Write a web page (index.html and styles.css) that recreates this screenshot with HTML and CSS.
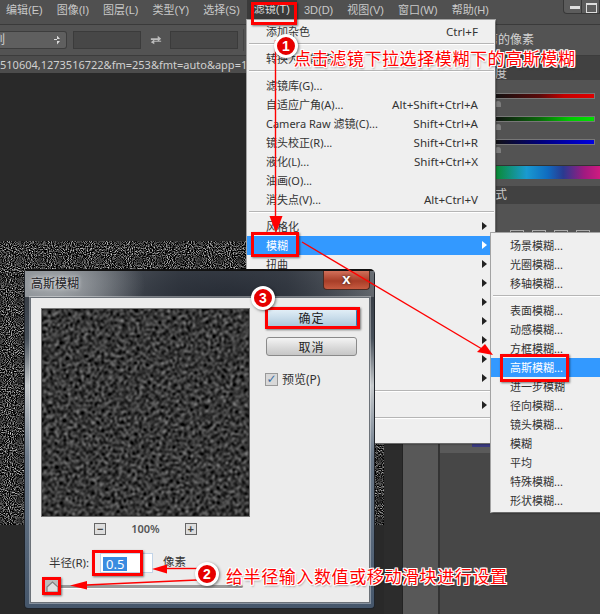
FILE: index.html
```
<!DOCTYPE html>
<html lang="zh">
<head>
<meta charset="utf-8">
<title>高斯模糊</title>
<link rel="stylesheet" href="styles.css">
</head>
<body>
<div class="screen">
  <svg class="defs" width="0" height="0" aria-hidden="true">
    <filter id="grain" x="0" y="0" width="100%" height="100%" color-interpolation-filters="sRGB">
      <feTurbulence type="fractalNoise" baseFrequency="0.95" numOctaves="1" seed="4"/>
      <feColorMatrix type="matrix" values="1 0 0 0 0 1 0 0 0 0 1 0 0 0 0 0 0 0 0 1"/>
      <feComponentTransfer>
        <feFuncR type="linear" slope="2.2" intercept="-0.9"/>
        <feFuncG type="linear" slope="2.2" intercept="-0.9"/>
        <feFuncB type="linear" slope="2.2" intercept="-0.9"/>
      </feComponentTransfer>
    </filter>
    <filter id="soft" x="0" y="0" width="100%" height="100%" color-interpolation-filters="sRGB">
      <feTurbulence type="fractalNoise" baseFrequency="0.45" numOctaves="2" seed="9"/>
      <feColorMatrix type="matrix" values="1 0 0 0 0 1 0 0 0 0 1 0 0 0 0 0 0 0 0 1"/>
      <feGaussianBlur stdDeviation="0.8"/>
      <feComponentTransfer>
        <feFuncR type="linear" slope="2.2" intercept="-0.88"/>
        <feFuncG type="linear" slope="2.2" intercept="-0.88"/>
        <feFuncB type="linear" slope="2.2" intercept="-0.88"/>
      </feComponentTransfer>
    </filter>
  </svg>

  <header class="menubar">
    <span>编辑(E)</span><span>图像(I)</span><span>图层(L)</span><span>类型(Y)</span><span>选择(S)</span>
    <span class="menu-open">滤镜(T)</span><span>3D(D)</span><span>视图(V)</span><span>窗口(W)</span><span>帮助(H)</span>
    <div class="winctl"><i class="minbtn"></i><i class="maxbtn"></i></div>
  </header>

  <div class="optionsbar">
    <div class="select"><span class="cut">列</span><span class="updown"></span></div>
    <div class="field"></div>
    <svg class="swap" viewBox="0 0 14 12"><path d="M1 4h8V1l4 3.500L9 8V6H1zM13 8H5v3L1 8.500 5 5v2h8z" fill="#bbb"/></svg>
    <div class="field"></div>
    <div class="rule"></div>
    <span class="optlabel">剪的像素</span>
  </div>

  <main class="workspace">
    <section class="canvas">
      <div class="tab">510604,1273516722&amp;fm=253&amp;fmt=auto&amp;app=1</div>
      <div class="pasteboard"></div>
      <svg class="noise"><rect width="100%" height="100%" filter="url(#grain)"/></svg>
      <div class="pasteboard-low"></div>
    </section>
    <div class="band"></div>
    <div class="midcol"></div>
    <aside class="dock">
      <div class="dock-tabs"><span>度</span></div>
      <div class="sliders">
        <div class="ramp ramp-r"></div><i class="tick"></i>
        <div class="ramp ramp-g"></div><i class="tick"></i>
        <div class="ramp ramp-b"></div><i class="tick"></i>
      </div>
      <div class="spectrum"></div>
      <div class="dock-tabs second"><span>式</span></div>
      <div class="dock-icons"><i></i><i></i><i></i><i></i></div>
      <div class="dock-fill"><div class="dock-strip"><i></i></div></div>
    </aside>
  </main>

  <nav class="menu filter-menu">
    <div class="row"><span>添加杂色</span><span class="keys">Ctrl+F</span></div>
    <div class="sep"></div>
    <div class="row"><span>转换为智能滤镜</span></div>
    <div class="sep"></div>
    <div class="row"><span>滤镜库(G)...</span></div>
    <div class="row"><span>自适应广角(A)...</span><span class="keys">Alt+Shift+Ctrl+A</span></div>
    <div class="row"><span>Camera Raw 滤镜(C)...</span><span class="keys">Shift+Ctrl+A</span></div>
    <div class="row"><span>镜头校正(R)...</span><span class="keys">Shift+Ctrl+R</span></div>
    <div class="row"><span>液化(L)...</span><span class="keys">Shift+Ctrl+X</span></div>
    <div class="row"><span>油画(O)...</span></div>
    <div class="row"><span>消失点(V)...</span><span class="keys">Alt+Ctrl+V</span></div>
    <div class="sep"></div>
    <div class="row more"><span>风格化</span></div>
    <div class="row more active"><span>模糊</span></div>
    <div class="row more"><span>扭曲</span></div>
    <div class="row more"></div>
    <div class="row more"></div>
    <div class="row more"></div>
    <div class="row more"></div>
    <div class="row more"></div>
    <div class="row more"></div>
    <div class="sep"></div>
    <div class="row more"></div>
    <div class="sep"></div>
    <div class="row"></div>
  </nav>

  <nav class="menu blur-menu">
    <div class="row"><span>场景模糊...</span></div>
    <div class="row"><span>光圈模糊...</span></div>
    <div class="row"><span>移轴模糊...</span></div>
    <div class="sep"></div>
    <div class="row"><span>表面模糊...</span></div>
    <div class="row"><span>动感模糊...</span></div>
    <div class="row"><span>方框模糊...</span></div>
    <div class="row active"><span>高斯模糊...</span></div>
    <div class="row"><span>进一步模糊</span></div>
    <div class="row"><span>径向模糊...</span></div>
    <div class="row"><span>镜头模糊...</span></div>
    <div class="row"><span>模糊</span></div>
    <div class="row"><span>平均</span></div>
    <div class="row"><span>特殊模糊...</span></div>
    <div class="row"><span>形状模糊...</span></div>
  </nav>

  <section class="dialog">
    <div class="titlebar">
      <span class="title">高斯模糊</span>
      <span class="close">x</span>
    </div>
    <div class="dialog-body">
      <div class="left">
        <svg class="preview"><rect width="100%" height="100%" filter="url(#soft)"/></svg>
        <div class="zoomrow">
          <span class="zbtn">−</span><span class="zval">100%</span><span class="zbtn">+</span>
        </div>
        <div class="radius">
          <span class="rlabel">半径(R):</span>
          <div class="rinput"><span class="selected">0.5</span></div>
          <span class="runit">像素</span>
        </div>
        <div class="track">
          <svg class="thumb" viewBox="0 0 15 15"><path d="M2 13V8L7.500 3 13 8v5z" fill="#e0e0e0" stroke="#808080" stroke-width="1.200"/></svg>
          <div class="rail"></div>
        </div>
      </div>
      <div class="right">
        <button class="btn primary">确定</button>
        <button class="btn">取消</button>
        <label class="check"><span class="box">✓</span><span>预览(P)</span></label>
      </div>
    </div>
  </section>

  <svg class="arrows" viewBox="0 0 600 614">
    <g class="lines">
      <line x1="275.500" y1="40" x2="275.500" y2="218"/>
      <line x1="302" y1="242" x2="482" y2="349"/>
      <line x1="198" y1="568.500" x2="166" y2="568.500"/>
      <line x1="197" y1="580" x2="86" y2="585"/>
    </g>
    <g class="heads">
      <path d="M269.500 216h13L276 233z"/>
      <path d="M493 355l-16-3 8-8z"/>
      <path d="M152 569l15-4.500v9z"/>
      <path d="M70 585.500l17-4.500v8.500z"/>
    </g>
  </svg>

  <div class="mark mark-menu"></div>
  <div class="mark mark-blur"></div>
  <div class="mark mark-gauss"></div>
  <div class="mark mark-ok"></div>
  <div class="mark mark-input"></div>
  <div class="mark mark-thumb"></div>

  <span class="badge badge-1">1</span>
  <span class="badge badge-2">2</span>
  <span class="badge badge-3">3</span>

  <p class="note note-1">点击滤镜下拉选择模糊下的高斯模糊</p>
  <p class="note note-2">给半径输入数值或移动滑块进行设置</p>
</div>
</body>
</html>
```
FILE: styles.css
```
* { box-sizing: border-box; }
html, body { margin: 0; padding: 0; background: #333; }
body { font: 12px/1 "Liberation Sans", "Noto Sans CJK SC", sans-serif; }
p { margin: 0; }
.defs { position: absolute; }

.screen {
  position: relative; width: 600px; height: 614px; overflow: hidden;
  display: flex; flex-direction: column; background: #535353;
}

/* application chrome */
.menubar {
  height: 25px; flex: none; display: flex; align-items: center; gap: 14px;
  padding: 0 0 3px 6px; background: #505050; color: #c9c9c9; border-bottom: 1px solid #3a3a3a;
  white-space: nowrap; position: relative; font-size: 11px;
}
.menu-open { color: #ddd; background: #3a3a3a; margin: -3px -7px 0; padding: 8px 7px 7px; }
.winctl { position: absolute; top: 0; right: 0; width: 37px; height: 14px; display: flex; background: #5c5c5c; border: 1px solid #383838; border-top: 0; border-radius: 0 0 0 4px; }
.winctl i { flex: 1; position: relative; }
.minbtn { border-right: 1px solid #383838; }
.minbtn::after { content: ""; position: absolute; left: 6px; top: 6px; width: 10px; height: 3px; background: #ddd; }
.maxbtn::after { content: ""; position: absolute; left: 4px; top: 3px; width: 9px; height: 7px; border: 1px solid #ddd; border-top-width: 2px; }

.optionsbar {
  height: 31px; flex: none; display: flex; align-items: center; gap: 6px;
  background: #535353; border-bottom: 1px solid #3c3c3c; position: relative;
}
.select {
  width: 67px; height: 18px; display: flex; align-items: center; justify-content: space-between;
  padding: 0 6px 0 0; background: #5f5f5f; border: 1px solid #3d3d3d; border-left: 0; border-radius: 0 3px 3px 0; color: #ccc; overflow: hidden;
}
.cut { margin-left: -7px; }
.updown { width: 6px; height: 9px; background: linear-gradient(#ddd 0 40%, transparent 40% 60%, #ddd 60%); clip-path: polygon(50% 0, 100% 40%, 0 40%, 0 60%, 100% 60%, 50% 100%); }
.field { width: 68px; height: 18px; background: #474747; border: 1px solid #3b3b3b; }
.swap { width: 12px; height: 12px; margin: 0 2px 0 3px; }
.rule { width: 1px; height: 22px; background: #444; margin-left: -1px; }
.optlabel { position: absolute; left: 486px; top: 9px; color: #d2d2d2; font-size: 12px; }

.workspace { flex: 1; min-height: 0; display: flex; }
.canvas { width: 384px; flex: none; display: flex; flex-direction: column; background: #282828; }
.tab { height: 17px; flex: none; background: #4c4c4c; color: #d0d0d0; padding-top: 2px; font-family: "Noto Sans", sans-serif; font-size: 11px; line-height: 14px; white-space: nowrap; overflow: hidden; }
.pasteboard { height: 168px; flex: none; background: #292929; }
.noise { display: block; width: 100%; height: 284px; flex: none; background: #111; }
.pasteboard-low { flex: 1; background: #292929; }
.band { width: 19px; flex: none; background: #2c2c2c; border-right: 1px solid #232323; }
.midcol { width: 37px; flex: none; background: #585858; border-right: 2px solid #333; }
.dock { flex: 1; min-width: 0; display: flex; flex-direction: column; background: #535353; }
.dock-tabs { height: 24px; flex: none; background: #414141; color: #c8c8c8; padding: 12px 0 0 55px; font-size: 12px; }
.dock-tabs span { display: inline-block; }
.sliders { padding: 13px 5px 0 55px; display: flex; flex-direction: column; height: 85px; flex: none; }
.ramp { height: 6px; flex: none; border: 1px solid #777; border-left: 0; }
.ramp-r { background: linear-gradient(90deg, #111, #5a0a0a 45%, #c40000 70%, #e00000); }
.ramp-g { background: linear-gradient(90deg, #111, #0a6a0a 45%, #00c800 75%, #00e000); }
.ramp-b { background: linear-gradient(90deg, #111, #00007a 45%, #0000e0); }
.tick { display: block; width: 5px; height: 17px; flex: none; position: relative; }
.tick::after { content: ""; position: absolute; left: 0; top: 2px; width: 6px; height: 6px; background: #7d7d7d; border-radius: 50% 50% 0 0; }
.spectrum { height: 14px; flex: none; margin: 0 0 7px 55px; border-top: 1px solid #333; background:
  linear-gradient(90deg, #0a8a30 0, #1a9ad0 30%, #106cc0 50%, #2a3a90 65%, #a01a80 85%, #d01a80 100%); }
.dock-tabs.second { height: 18px; padding-top: 3px; }
.dock-icons { height: 34px; flex: none; display: flex; align-items: flex-end; gap: 8px; padding: 0 8px 0 70px; }
.dock-icons i { width: 14px; height: 8px; border: 1px solid #aaa; border-bottom: 0; }
.dock-fill { flex: 1; background: #474747; padding-top: 205px; }
.dock-strip { width: 50px; height: 10px; background: #5a5a5a; position: relative; }
.dock-strip i { position: absolute; right: 0; top: 0; width: 18px; height: 4px; background: #3b3b80; }

/* menus */
.menu {
  position: absolute; background: #efefef; color: #333; display: flex; flex-direction: column;
  box-shadow: 1px 1px 2px rgba(0,0,0,.55), 0 0 0 1px #aaa;
  font-family: "Noto Sans", "Noto Sans CJK SC", sans-serif; font-size: 11px;
}
.row { height: 19px; flex: none; display: flex; align-items: center; justify-content: space-between; position: relative; white-space: nowrap; line-height: 19px; }
.keys { font-size: 11.6px; }
.row.active { background: #3399ff; color: #fff; }
.more::after { content: ""; position: absolute; right: 8px; top: 5px; border-left: 5px solid #222; border-top: 4px solid transparent; border-bottom: 4px solid transparent; }
.more.active::after { border-left-color: #fff; }
.sep { height: 8px; flex: none; padding-top: 2px; }
.sep::before { content: ""; display: block; height: 2px; background: linear-gradient(#b5b5b5 50%, #fff 50%); }
.filter-menu { left: 247px; top: 20px; width: 248px; height: 423px; padding-top: 2px; }
.filter-menu .row { padding: 0 17px 0 19px; }
.filter-menu .sep { margin: 0 1px 0 2px; }
.blur-menu { left: 491px; top: 233px; width: 109px; height: 279px; padding-top: 2.5px; z-index: 2; }
.blur-menu .row { padding-left: 19px; }
.blur-menu .sep { margin: 0 0 0 2px; }

/* dialog */
.dialog {
  position: absolute; left: 24px; top: 269px; width: 351px; height: 340px; z-index: 3;
  display: flex; flex-direction: column; padding: 0 4px 5px 5px;
  border: 1px solid #20242a; border-top: 2px solid #111; border-radius: 5px 5px 4px 4px;
  background: linear-gradient(#9aa0a6 0, #3a4048 8%, #47505a 20%, #c7cbce 34%, #6c7a8a 55%, #45566b 100%);
}
.titlebar {
  height: 26px; flex: none; margin: 0 -4px 0 -5px; padding: 0 0 0 6px; display: flex; align-items: flex-start; justify-content: space-between;
  background: radial-gradient(ellipse 90px 50px at 30px 14px, #a4a8ac 0, rgba(150,155,160,0) 100%), radial-gradient(ellipse 170px 60px at 200px 30px, #252a33 0, rgba(50,55,65,0) 100%), linear-gradient(90deg, #747a80, #3f454e 45%, #434952 75%, #6b7076);
}
.title { margin-top: 6px; color: #1c2024; text-shadow: 0 0 4px #fff; font-size: 12px; line-height: 14px; }
.close {
  width: 47px; height: 19px; margin-right: 4px; border: 1px solid #4b2a22; border-top: 0; border-radius: 0 0 4px 4px;
  background: linear-gradient(#d2705a, #a83e28 55%, #c65a40); color: #fff; text-align: center;
  font: bold 15px/15px "Liberation Sans", sans-serif; text-shadow: 0 0 3px #222;
}
.dialog-body {
  flex: 1; display: flex; gap: 16px; padding: 10px 0 0 10px; background: #ececec;
  border: 1px solid #6b7178; box-shadow: 0 0 0 1px rgba(255,255,255,.35);
}
.left { width: 209px; flex: none; display: flex; flex-direction: column; }
.preview { display: block; width: 209px; height: 209px; flex: none; background: #161616; border: 1px solid #777; }
.zoomrow { display: flex; justify-content: center; align-items: center; gap: 25px; margin-top: 6px; height: 12px; color: #444; }
.zbtn { width: 12px; height: 12px; border: 1px solid #666; background: #ddd; font: bold 11px/10px "Liberation Sans", sans-serif; text-align: center; }
.zval { font: 11px/12px "Noto Sans", sans-serif; color: #555; font-weight: 600; }
.radius { display: flex; align-items: center; height: 20px; margin: 18px 0 0 8px; color: #333; white-space: nowrap; font-size: 11.5px; }
.rlabel { width: 51px; flex: none; font-family: "Noto Sans", "Noto Sans CJK SC", sans-serif; }
.rinput { width: 53px; height: 20px; flex: none; background: #fff; border: 1px solid #c2d4e8; padding: 3px 0 0 2px; }
.selected { display: inline-block; background: #3a8be0; color: #fff; padding: 0 3px; font: 13px/14px "Noto Sans", sans-serif; }
.runit { margin-left: 10px; }
.track { display: flex; align-items: center; margin: 4px 0 0 4px; height: 18px; }
.thumb { width: 15px; height: 15px; flex: none; background: #bcbcbc; }
.rail { width: 183px; height: 3px; background: #9a9a9a; border-radius: 2px; box-shadow: 0 1px 0 #fff; }
.right { display: flex; flex-direction: column; align-items: flex-start; }
.btn {
  width: 91px; height: 19px; padding: 0; font: 12px/14px "Noto Sans CJK SC", sans-serif; color: #222; letter-spacing: 1px;
  background: linear-gradient(#f4f4f4, #dcdcdc 50%, #c6c6c6); border: 1px solid #8a8a8a; border-radius: 3px;
}
.btn.primary { height: 20px; background: linear-gradient(#e4f0f8, #c8dcea 50%, #a8c4d8); border-color: #2c7fb8; box-shadow: 0 0 2px #4aa0e0; }
.btn + .btn { margin-top: 9px; }
.check { display: flex; align-items: center; gap: 4px; margin: 17px 0 0 -1px; color: #333; font-family: "Noto Sans", "Noto Sans CJK SC", sans-serif; }
.box { width: 13px; height: 13px; border: 1px solid #999; background: #d8d8d8; color: #3a6ea5; font: bold 12px/11px "DejaVu Sans", sans-serif; text-align: center; }

/* annotations */
.arrows { position: absolute; left: 0; top: 0; width: 600px; height: 614px; z-index: 4; pointer-events: none; }
.lines line { stroke: #f00; stroke-width: 1.400; }
.heads path { fill: #f00; }
.mark { position: absolute; z-index: 5; border: 3px solid #f00; box-shadow: 1px 1px 2px rgba(0,0,0,.5); }
.mark-menu { left: 251px; top: 2px; width: 46px; height: 23px; }
.mark-blur { left: 251px; top: 232px; width: 48px; height: 25px; }
.mark-gauss { left: 500px; top: 354px; width: 69px; height: 28px; }
.mark-ok { left: 265px; top: 307px; width: 95px; height: 22px; }
.mark-input { left: 92px; top: 550px; width: 51px; height: 26px; }
.mark-thumb { left: 42px; top: 577px; width: 19px; height: 18px; }

.badge {
  position: absolute; z-index: 6; width: 24px; height: 24px; border-radius: 50%; background: #e60000;
  border: 3px solid #fff; box-shadow: 1px 1px 3px rgba(0,0,0,.5); color: #fff; text-align: center;
  font: bold 14px/18px "Liberation Sans", sans-serif;
}
.badge-1 { left: 274px; top: 34px; }
.badge-2 { left: 195px; top: 562px; }
.badge-3 { left: 251px; top: 286px; }

.note {
  position: absolute; z-index: 6; color: #f00; white-space: nowrap; font-family: "Noto Sans CJK SC", sans-serif; font-size: 17px; line-height: 20px; letter-spacing: .6px;
  text-shadow: 1px 0 0 #fff, -1px 0 0 #fff, 0 1px 0 #fff, 0 -1px 0 #fff, 1px 1px 0 #fff, -1px -1px 0 #fff, 1px -1px 0 #fff, -1px 1px 0 #fff, 1px 2px 2px rgba(0,0,0,.4);
}
.note-1 { left: 294px; top: 48px; }
.note-2 { left: 226px; top: 566px; }
```
